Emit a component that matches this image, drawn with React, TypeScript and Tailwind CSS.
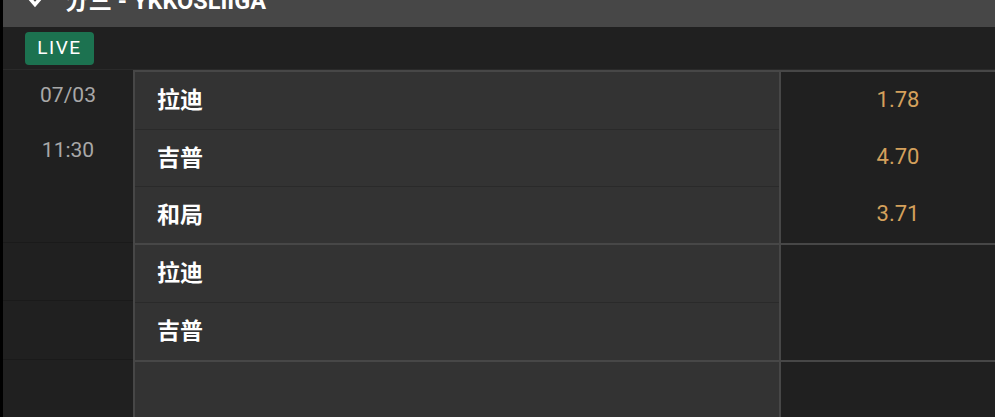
const odds = ["1.78", "4.70", "3.71"]

function Row({ label, first }: { label: string; first?: boolean }) {
  return (
    <div
      className={`h-[57px] flex items-center pl-[22px] pb-[4px] text-[23px] font-bold text-white ${first ? "" : "border-t border-[#2a2a2a]"}`}
    >
      {label}
    </div>
  )
}

export default function App() {
  return (
    <div className="w-[995px] h-[417px] bg-black pl-[3px] overflow-hidden font-['Roboto','Noto_Sans_CJK_SC',sans-serif]">
      <div className="h-full bg-[#202020] flex flex-col">
        {/* header, cut off at the top */}
        <div className="h-[27px] shrink-0 bg-[#474747] overflow-hidden flex items-start">
          <svg className="ml-[21px] mt-[-12px] w-[22px] h-[22px] shrink-0" viewBox="0 0 20 20" fill="none">
            <path d="M3 7l7 8 7-8" stroke="white" strokeWidth="3.2" strokeLinecap="square" />
          </svg>
          <span className="ml-[19px] mt-[-13px] text-[23.5px] leading-[28px] font-bold text-white font-['Roboto','Noto_Sans_CJK_SC',sans-serif]">
            分三 - YKKOSLIIGA
          </span>
        </div>

        <div className="h-[43px] shrink-0 flex items-center pl-[22px] border-b border-[#2a2a2a]">
          <span className="h-[33px] w-[69px] justify-center flex items-center rounded-[4px] bg-[#1c7250] text-white text-[19px] tracking-[1.5px]">
            LIVE
          </span>
        </div>

        {/* market 1 */}
        <div className="flex shrink-0">
          <div className="w-[130px] shrink-0 flex flex-col items-center pt-[11px] gap-[27px] text-[21px] leading-[28px] text-[#a8a8a8] border-b border-[#1a1a1a]">
            <span>07/03</span>
            <span>11:30</span>
          </div>
          <div className="w-[648px] shrink-0 bg-[#333333] border-l-2 border-t-2 border-r-2 border-[#474747] font-['Noto_Sans_CJK_SC',sans-serif]">
            <Row label="拉迪" first />
            <Row label="吉普" />
            <Row label="和局" />
          </div>
          <div className="flex-1 border-t-2 border-[#474747] pl-[20px]">
            {odds.map((o) => (
              <div key={o} className="h-[57px] flex items-center justify-center pb-[3px] text-[22px] text-[#d4a05c]">
                {o}
              </div>
            ))}
          </div>
        </div>

        {/* market 2 */}
        <div className="flex shrink-0">
          <div className="w-[130px] shrink-0 flex flex-col">
            <div className="h-[58px] border-b border-[#1a1a1a]" />
            <div className="h-[59px] border-b border-[#1a1a1a]" />
          </div>
          <div className="w-[648px] shrink-0 bg-[#333333] border-l-2 border-t-2 border-r-2 border-[#474747] font-['Noto_Sans_CJK_SC',sans-serif]">
            <Row label="拉迪" first />
            <Row label="吉普" />
          </div>
          <div className="flex-1 border-t-2 border-[#474747]" />
        </div>

        {/* market 3, cut off */}
        <div className="flex flex-1">
          <div className="w-[130px] shrink-0" />
          <div className="w-[648px] shrink-0 bg-[#333333] border-l-2 border-t-2 border-r-2 border-[#474747]" />
          <div className="flex-1 border-t-2 border-[#474747]" />
        </div>
      </div>
    </div>
  )
}
